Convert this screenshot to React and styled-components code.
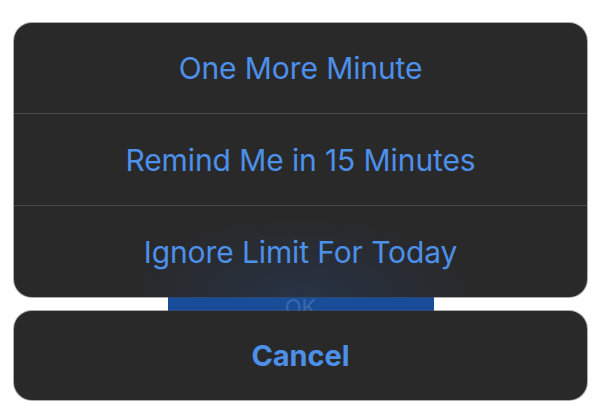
import { createGlobalStyle, styled } from 'styled-components'

const Global = createGlobalStyle`
    html, body {
        margin: 0;
        background: #ffffff;
        font-family: Inter, "Noto Sans", sans-serif;
    }
`

const Page = styled.div`
    width: 601px;
    height: 415px;
    box-sizing: border-box;
    padding: 23px 14px 0 14px;
    display: flex;
    flex-direction: column;
`

const Sheet = styled.div`
    background-color: #29292a;
    border-radius: 18px;
    overflow: hidden;
    display: flex;
    flex-direction: column;
    box-shadow: 0 0 0 1px rgba(70, 70, 70, 0.45);
    position: relative;
`

const Glow = styled.div`
    position: absolute;
    left: 0;
    right: 0;
    bottom: 0;
    height: 120px;
    background: radial-gradient(ellipse 170px 80px at 50% 100%, rgba(35, 75, 135, 0.28), rgba(35, 75, 135, 0) 100%);
    pointer-events: none;
`

const Action = styled.div`
    height: ${props => props.$height}px;
    display: flex;
    align-items: center;
    justify-content: center;
    color: #4d90ea;
    font-size: ${props => props.$bold ? 29 : 30}px;
    font-weight: ${props => props.$bold ? 700 : 400};
    letter-spacing: -0.1px;
    border-top: ${props => props.$divider ? '1px solid #4a4a4c' : 'none'};
    position: relative;
    z-index: 1;
`

const Gap = styled.div`
    height: 14px;
    display: flex;
    justify-content: center;
`

const BehindButton = styled.div`
    width: 266px;
    height: 14px;
    background-color: #1a4d99;
    overflow: hidden;
    display: flex;
    justify-content: center;
    color: rgba(110, 150, 200, 0.4);
    font-size: 22px;
    line-height: 14px;
    padding-top: 3px;
    box-sizing: border-box;
`

const actions = ['One More Minute', 'Remind Me in 15 Minutes', 'Ignore Limit For Today']

export default function App() {
    return (
        <>
            <Global />
            <Page>
                <Sheet>
                    <Glow />
                    {actions.map((label, i) => (
                        <Action key={label} $height={i === 0 ? 90 : 91} $divider={i > 0}>
                            {label}
                        </Action>
                    ))}
                </Sheet>
                <Gap>
                    <BehindButton>OK</BehindButton>
                </Gap>
                <Sheet>
                    <Action $height={89} $bold>Cancel</Action>
                </Sheet>
            </Page>
        </>
    )
}
